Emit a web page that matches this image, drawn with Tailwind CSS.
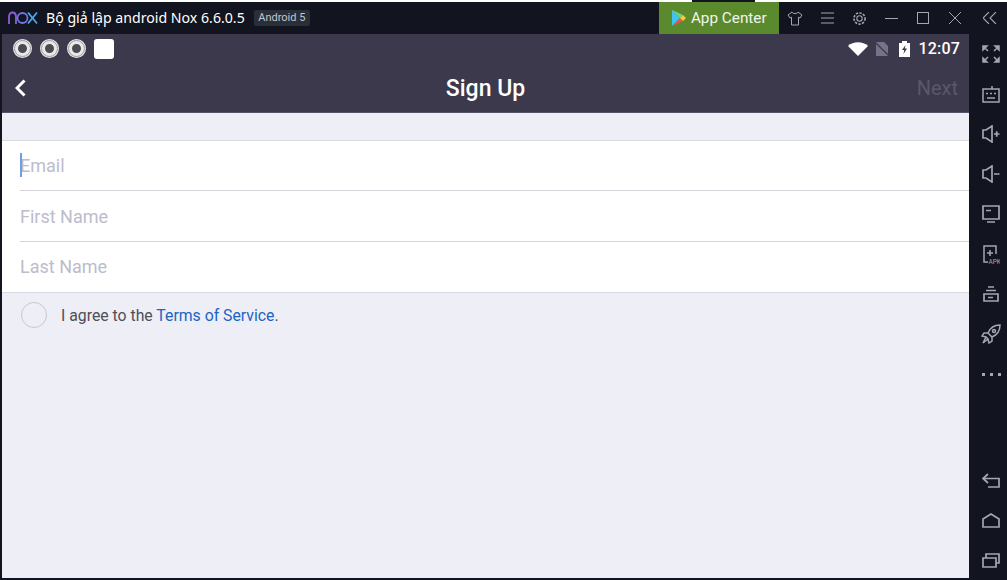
<!DOCTYPE html>
<html lang="en">
<head>
    <meta charset="UTF-8">
    <title>Nox Sign Up</title>
    <script src="https://cdn.jsdelivr.net/npm/@tailwindcss/browser@4"></script>
</head>
<body class="bg-[#12151f] overflow-hidden">
    <div class="w-[1007px] h-[580px] flex flex-col bg-[#12151f] font-['Roboto',sans-serif]">
        <!-- strip of the window behind -->
        <div class="h-[2px] flex shrink-0 bg-white">
            <div class="ml-[692px] w-[63px] bg-[#12151f]"></div>
        </div>

        <!-- Title bar -->
        <div class="h-[32px] flex items-center shrink-0 text-white">
            <svg class="ml-[8px] w-[30px] h-[14px]" viewBox="0 0 30 14" fill="none" stroke-width="1.800">
                <path d="M1 13V6C1 3 2.500 1.500 4.500 1.500S8 3 8 6v7" stroke="#8a5fd8"/>
                <circle cx="14.500" cy="7" r="5" stroke="#6f74e4"/>
                <path d="M20 1.500l9 11M29 1.500l-9 11" stroke="#4aa8f0"/>
            </svg>
            <span class="ml-[8px] text-[14.15px] font-['Noto_Sans',sans-serif] leading-none">Bộ giả lập android Nox 6.6.0.5</span>
            <span class="ml-[9px] px-[4.500px] h-[16px] flex items-center bg-[#2a2e38] rounded-[2px] text-[11px] text-[#c4c6cc]">Android 5</span>
            <div class="ml-[349px] w-[120px] h-full bg-[#5b8a2e] flex items-center">
                <svg class="ml-[13px] w-[14px] h-[16px]" viewBox="0 0 14 16">
                    <path d="M0 0v16l8-8z" fill="#3fc4ee"/>
                    <path d="M0 0l8 8 3-3z" fill="#6fd08a"/>
                    <path d="M0 16l8-8 3 3z" fill="#e4574c"/>
                    <path d="M8 8l3-3 3 3-3 3z" fill="#f7c933"/>
                </svg>
                <span class="ml-[5px] text-[15.3px] text-[#f0f4ea]">App Center</span>
            </div>
            <svg class="ml-[8px] w-[16px] h-[15px]" viewBox="0 0 16 15" fill="none" stroke="#a4a7ad"><path d="M5 1L1 4l2 3 1.500-.8V14h7V6.200L13 7l2-3-4-3c-.5 2-5.500 2-6 0z"/></svg>
            <svg class="ml-[18px] w-[13px] h-[12px]" viewBox="0 0 13 12" stroke="#a4a7ad"><path d="M0 1h13M0 6h13M0 11h13"/></svg>
            <svg class="ml-[18px] w-[15px] h-[15px]" viewBox="0 0 14 14" fill="none" stroke="#a4a7ad"><circle cx="7" cy="7" r="2.500"/><circle cx="7" cy="7" r="5.200" stroke-width="1.500" stroke-dasharray="2.200 1.200"/></svg>
            <div class="ml-[18px] w-[13px] h-[1px] bg-[#a4a7ad]"></div>
            <div class="ml-[19px] w-[12px] h-[12px] border border-[#a4a7ad]"></div>
            <svg class="ml-[20px] w-[12px] h-[12px]" viewBox="0 0 12 12" stroke="#a4a7ad"><path d="M0 0l12 12M12 0L0 12"/></svg>
            <svg class="ml-[22px] w-[14px] h-[12px]" viewBox="0 0 14 12" fill="none" stroke="#a4a7ad" stroke-width="1.100"><path d="M6 0L0 6l6 6M13 0L7 6l6 6"/></svg>
        </div>

        <div class="flex flex-1 min-h-0">
            <!-- Android screen -->
            <div class="ml-[2px] w-[967px] h-[544px] bg-[#eeeef6] flex flex-col">
                <div class="bg-[#3c394d] h-[79px] shrink-0 border-b border-[#55536a] flex flex-col">
                    <!-- Status bar -->
                    <div class="h-[29px] flex items-center pl-[11px] pr-[9px] text-white">
                        <div class="w-[19px] h-[19px] rounded-full border-[5px] border-[#e8e8e8] bg-[#4a4a52] outline-1 -outline-offset-2 outline-[#9a9aa2]"></div>
                        <div class="ml-[8px] w-[19px] h-[19px] rounded-full border-[5px] border-[#e8e8e8] bg-[#4a4a52] outline-1 -outline-offset-2 outline-[#9a9aa2]"></div>
                        <div class="ml-[8px] w-[19px] h-[19px] rounded-full border-[5px] border-[#e8e8e8] bg-[#4a4a52] outline-1 -outline-offset-2 outline-[#9a9aa2]"></div>
                        <div class="ml-[8px] w-[20px] h-[20px] rounded-[3px] bg-white"></div>
                        <svg class="ml-auto w-[20px] h-[14px]" viewBox="0 0 20 14" fill="#fff"><path d="M0 4C5-1 15-1 20 4l-10 10z"/></svg>
                        <svg class="ml-[7px] w-[14px] h-[14px]" viewBox="0 0 14 14"><path d="M1 0h8l4 4v10H1z" fill="#75738a"/><path d="M0 0l14 14" stroke="#3c394d" stroke-width="1.300"/></svg>
                        <svg class="ml-[10px] w-[11px] h-[16px]" viewBox="0 0 11 16"><path d="M3 0h5v2h3v14H0V2h3z" fill="#fff"/><path d="M6.500 4L3 9h2.200L4.500 13 8 7.500H5.800z" fill="#3c394d"/></svg>
                        <span class="ml-[8px] text-[16px] font-medium leading-none tracking-[0.2px]">12:07</span>
                    </div>
                    <!-- Toolbar -->
                    <div class="flex-1 flex items-center relative pr-[11px]">
                        <svg class="ml-[13px] w-[11px] h-[18px]" viewBox="0 0 11 18" fill="none" stroke="#fff" stroke-width="3"><path d="M9.500 1.500L2 9l7.500 7.500"/></svg>
                        <span class="absolute inset-x-0 top-[14px] text-center text-white text-[23px] font-medium leading-none">Sign Up</span>
                        <span class="ml-auto pt-[1px] text-[20px] text-[#5a5868] leading-none">Next</span>
                    </div>
                </div>

                <!-- Form -->
                <div class="mt-[27px] bg-white border-y border-[#d9d9df] h-[153px] shrink-0 flex flex-col text-[18px] text-[#bcbccb]">
                    <div class="h-[50px] ml-[18px] border-b border-[#d4d4da] flex items-center relative">
                        <div class="absolute left-0 top-[12px] w-[2px] h-[24px] bg-[#6d9fe8]"></div>
                        <span>Email</span>
                    </div>
                    <div class="h-[51px] ml-[18px] border-b border-[#d4d4da] flex items-center">First Name</div>
                    <div class="flex-1 ml-[18px] pb-[1px] flex items-center">Last Name</div>
                </div>

                <div class="mt-[9px] ml-[19px] flex items-center">
                    <div class="w-[26px] h-[26px] rounded-full border border-[#c8c8d0]"></div>
                    <span class="ml-[14px] pt-[2px] text-[15.8px] text-[#4f4f57]">I agree to the <span class="text-[#1a64c2]">Terms of Service</span>.</span>
                </div>
            </div>

            <!-- Right side toolbar -->
            <div class="w-[38px] h-[546px] flex flex-col pl-[6px]">
                <div class="h-[40px] shrink-0 flex items-center justify-center">
                    <svg class="w-[18px] h-[18px]" viewBox="0 0 18 18" fill="#a4a7ad" stroke="#a4a7ad" stroke-width="1.500"><path d="M1 1h4L1 5zM17 1h-4l4 4zM1 17h4l-4-4zM17 17h-4l4-4zM3 3l3 3M15 3l-3 3M3 15l3-3M15 15l-3-3"/></svg>
                </div>
                <div class="h-[40px] shrink-0 flex items-center justify-center">
                    <svg class="w-[18px] h-[18px]" viewBox="0 0 18 18" fill="none" stroke="#a4a7ad" stroke-width="1.500"><path d="M1 4h16v13H1zM10 4V1"/><path d="M4 8.500h2M8 8.500h2M12 8.500h2M5 13h8"/></svg>
                </div>
                <div class="h-[40px] shrink-0 flex items-center justify-center">
                    <svg class="w-[18px] h-[18px]" viewBox="0 0 18 18" fill="none" stroke="#a4a7ad" stroke-width="1.700"><path d="M1 5h3l6-4v16l-6-4H1zM12 9h5.500M14.700 6.200v5.600"/></svg>
                </div>
                <div class="h-[40px] shrink-0 flex items-center justify-center">
                    <svg class="w-[18px] h-[18px]" viewBox="0 0 18 18" fill="none" stroke="#a4a7ad" stroke-width="1.700"><path d="M1 5h3l6-4v16l-6-4H1zM12 9h5.500"/></svg>
                </div>
                <div class="h-[40px] shrink-0 flex items-center justify-center">
                    <svg class="w-[18px] h-[18px]" viewBox="0 0 18 18" fill="none" stroke="#a4a7ad" stroke-width="1.700"><path d="M1 1h16v13H1zM5 17h8M4 5.500h5"/></svg>
                </div>
                <div class="h-[40px] shrink-0 flex items-center justify-center">
                    <svg class="w-[18px] h-[19px]" viewBox="0 0 18 19" fill="none" stroke="#a4a7ad" stroke-width="1.500"><path d="M14 9V1H2v16h4M8 5v6M5 8h6"/><text x="6.500" y="18.500" font-size="6.500" fill="#a4a7ad" stroke="none" font-family="Roboto">APK</text></svg>
                </div>
                <div class="h-[40px] shrink-0 flex items-center justify-center">
                    <svg class="w-[16px] h-[16px]" viewBox="0 0 16 16" fill="none" stroke="#a4a7ad" stroke-width="1.700"><path d="M5 1h6M3 4.500h10M1 8h14v7H1zM5 11.500h5"/></svg>
                </div>
                <div class="h-[40px] shrink-0 flex items-center justify-center">
                    <svg class="w-[20px] h-[20px]" viewBox="0 0 20 20" fill="none" stroke="#a4a7ad" stroke-width="1.500"><path d="M19 1c-6 0-10 3-12 8l4 4c5-2 8-6 8-12zM7 9H3L1 12l4 1M11 13v4l-3 2-1-4M5 13l2 2-5 4z"/><circle cx="13" cy="7" r="1.500"/></svg>
                </div>
                <div class="h-[40px] shrink-0 flex items-center justify-center gap-[5px]">
                    <div class="w-[3px] h-[3px] bg-[#a4a7ad]"></div>
                    <div class="w-[3px] h-[3px] bg-[#a4a7ad]"></div>
                    <div class="w-[3px] h-[3px] bg-[#a4a7ad]"></div>
                </div>
                <div class="mt-[66px] h-[40px] shrink-0 flex items-center justify-center">
                    <svg class="w-[18px] h-[15px]" viewBox="0 0 18 15" fill="none" stroke="#a4a7ad" stroke-width="1.700"><path d="M6 1L1 5.500 6 10M1 5.500h16V14H6"/></svg>
                </div>
                <div class="h-[40px] shrink-0 flex items-center justify-center">
                    <svg class="w-[18px] h-[15px]" viewBox="0 0 18 15" fill="none" stroke="#a4a7ad" stroke-width="1.700"><path d="M1 6l8-5 8 5v8H1z"/></svg>
                </div>
                <div class="h-[40px] shrink-0 flex items-center justify-center">
                    <svg class="w-[18px] h-[15px]" viewBox="0 0 18 15" fill="none" stroke="#a4a7ad" stroke-width="1.700"><path d="M1 5h13v9H1zM4 5V1h13v9h-3"/></svg>
                </div>
            </div>
        </div>
    </div>
</body>
</html>
